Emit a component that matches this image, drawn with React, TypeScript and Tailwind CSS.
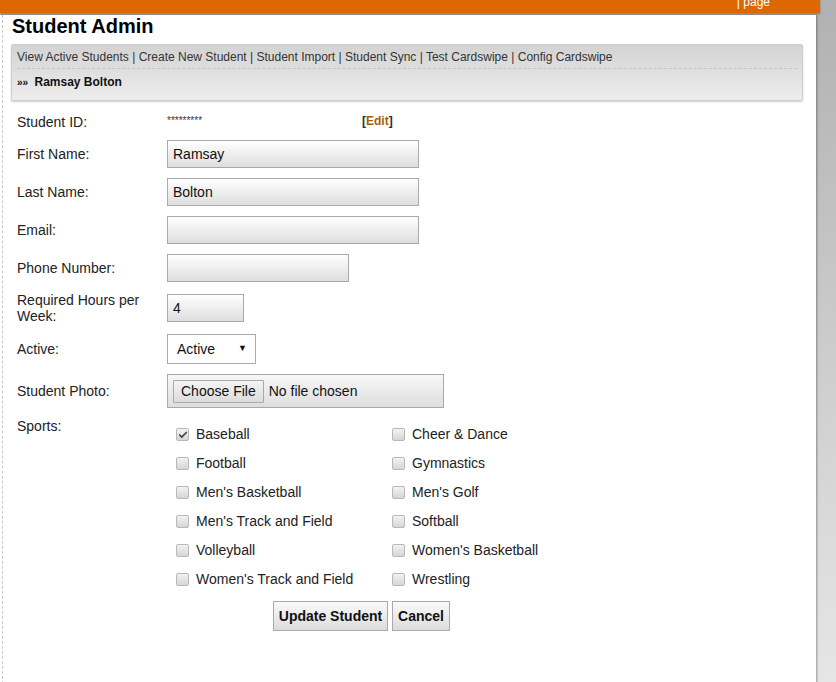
import { Check } from 'lucide-react'

const sportsLeft = ['Baseball', 'Football', "Men's Basketball", "Men's Track and Field", 'Volleyball', "Women's Track and Field"]
const sportsRight = ['Cheer & Dance', 'Gymnastics', "Men's Golf", 'Softball', "Women's Basketball", 'Wrestling']

function TextBox({ value, width }: { value: string; width: string }) {
  return (
    <div
      className={`${width} h-[28px] border border-[#a9a9a9] bg-gradient-to-b from-white to-[#dedede] pl-[5px] flex items-center text-[14px] text-[#111]`}
    >
      {value}
    </div>
  )
}

function Row({ label, children, className = '' }: { label: React.ReactNode; children: React.ReactNode; className?: string }) {
  return (
    <div className={`flex items-center ${className}`}>
      <div className="w-[150px] pr-[10px] text-[14px] leading-[16px] text-[#222]">{label}</div>
      {children}
    </div>
  )
}

function Box({ checked, label }: { checked?: boolean; label: string }) {
  return (
    <div className="h-[29px] flex items-center">
      <span className="w-[13px] h-[13px] rounded-[2px] border border-[#b8b8b8] bg-gradient-to-b from-[#f2f2f2] to-[#d6d6d6] flex items-center justify-center">
        {checked && <Check className="w-[10px] h-[10px] text-[#444]" strokeWidth={4} />}
      </span>
      <span className="ml-[7px] text-[14px] text-[#222]">{label}</span>
    </div>
  )
}

export default function App() {
  return (
    <div
      className="min-h-[682px] bg-gradient-to-b from-[#b1b1b1] to-[#e6e6e6]"
      style={{ fontFamily: '"Liberation Sans", Arial, sans-serif' }}
    >
      <div className="relative z-10 w-[820px] h-[13px] bg-[#db6800] shadow-[0_1px_2px_rgba(0,0,0,0.3)] overflow-hidden flex justify-end pr-[50px]">
        <span className="text-[12px] text-white leading-[12px] -mt-[4px]">| page</span>
      </div>
      <div className="w-[816px] min-h-[669px] bg-white shadow-[1px_0_2px_rgba(0,0,0,0.35)]">
        <div className="ml-[2px] min-h-[669px] border-l border-dashed border-[#c8c8c8]">
          <h1 className="ml-[9px] mt-[2px] text-[20px] leading-[23px] font-bold text-black">Student Admin</h1>

          <div className="ml-[8px] mt-[6px] w-[792px] rounded-[2px] border border-[#cfcfcf] bg-gradient-to-b from-[#d3d3d3] to-[#ededed] shadow-[0_1px_2px_rgba(0,0,0,0.2)] px-[5px] pt-[5px] pb-[10px]">
            <div className="pb-[4px] border-b border-dashed border-[#c4c4c4] text-[12px] leading-[14px] text-[#333]">
              View Active Students | Create New Student | Student Import | Student Sync | Test Cardswipe | Config Cardswipe
            </div>
            <div className="pt-[6px] text-[12px] leading-[14px] font-bold text-[#111]">
              <span className="text-[10px] font-bold mr-[3px]">»»</span> Ramsay Bolton
            </div>
          </div>

          <div className="pl-[14px]">
            <Row label="Student ID:" className="mt-[12px] h-[18px]">
              <span className="text-[10px] text-[#333] -mt-[4px]">*********</span>
              <span className="ml-[160px] text-[12px] font-bold text-[#2a2a40] -mt-[2px]">
                [<span className="text-[#a0600a]">Edit</span>]
              </span>
            </Row>
            <Row label="First Name:" className="mt-[9px]">
              <TextBox value="Ramsay" width="w-[252px]" />
            </Row>
            <Row label="Last Name:" className="mt-[10px]">
              <TextBox value="Bolton" width="w-[252px]" />
            </Row>
            <Row label="Email:" className="mt-[10px]">
              <TextBox value="" width="w-[252px]" />
            </Row>
            <Row label="Phone Number:" className="mt-[10px]">
              <TextBox value="" width="w-[182px]" />
            </Row>
            <Row label="Required Hours per Week:" className="mt-[10px] h-[32px]">
              <TextBox value="4" width="w-[77px]" />
            </Row>
            <Row label="Active:" className="mt-[10px]">
              <div className="w-[89px] h-[30px] border border-[#a9a9a9] bg-white flex items-center justify-between pl-[9px] pr-[8px] text-[14px] text-[#111]">
                <span>Active</span>
                <span className="text-[9px]">▼</span>
              </div>
            </Row>
            <Row label="Student Photo:" className="mt-[10px]">
              <div className="w-[277px] h-[34px] border border-[#a9a9a9] bg-gradient-to-b from-[#f7f7f7] to-[#dedede] flex items-center pl-[5px] text-[14px] text-[#111]">
                <span className="h-[23px] px-[7px] border border-[#a9a9a9] bg-gradient-to-b from-[#f4f4f4] to-[#dcdcdc] flex items-center rounded-[1px]">
                  Choose File
                </span>
                <span className="ml-[5px]">No file chosen</span>
              </div>
            </Row>
            <div className="mt-[10px] flex items-start">
              <div className="w-[150px] text-[14px] leading-[16px] text-[#222]">Sports:</div>
              <div className="mt-[2px] ml-[9px] grid grid-cols-[216px_216px]">
                <div className="flex flex-col">
                  {sportsLeft.map((s, i) => (
                    <Box key={s} label={s} checked={i === 0} />
                  ))}
                </div>
                <div className="flex flex-col">
                  {sportsRight.map((s) => (
                    <Box key={s} label={s} />
                  ))}
                </div>
              </div>
            </div>
            <div className="mt-[7px] pl-[256px] flex gap-[4px]">
              <button className="h-[30px] w-[115px] border border-[#a9a9a9] bg-gradient-to-b from-[#fafafa] to-[#dcdcdc] text-[14px] font-bold text-[#111]">
                Update Student
              </button>
              <button className="h-[30px] w-[58px] border border-[#a9a9a9] bg-gradient-to-b from-[#fafafa] to-[#dcdcdc] text-[14px] font-bold text-[#111]">
                Cancel
              </button>
            </div>
          </div>
        </div>
      </div>
    </div>
  )
}
